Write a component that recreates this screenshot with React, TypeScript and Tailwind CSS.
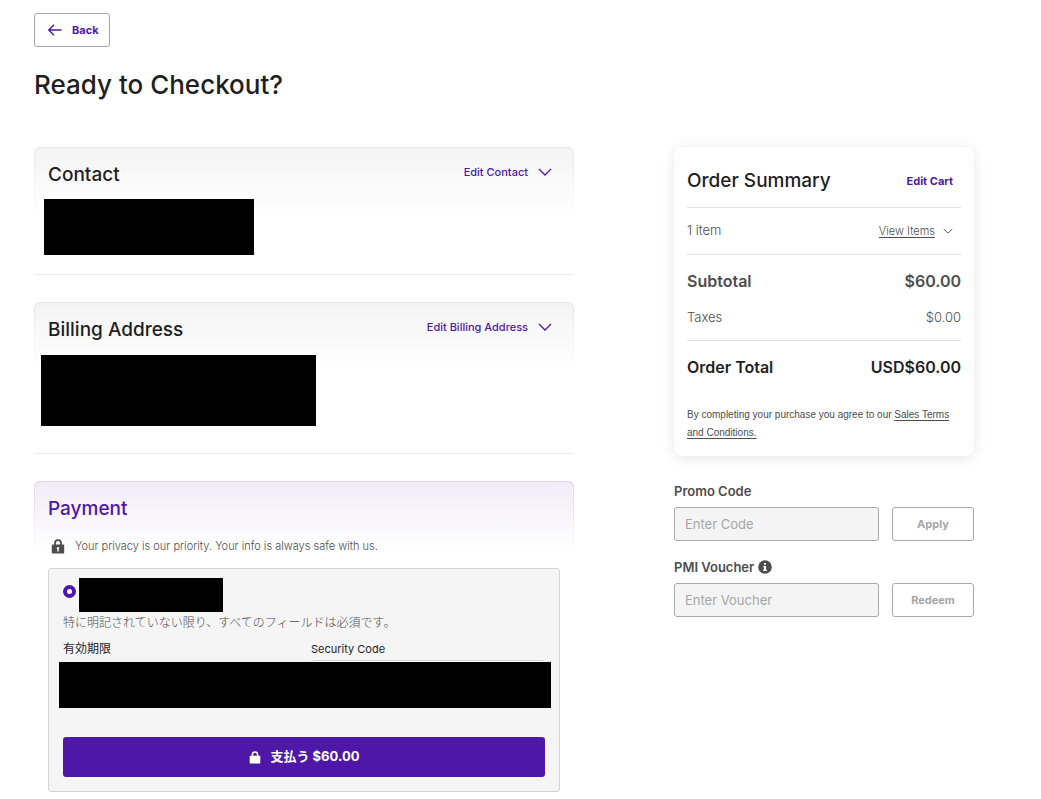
import type { ReactNode } from 'react';

function Chevron({ className }: { className: string }) {
  return (
    <svg viewBox="0 0 14 8" className={className} fill="none" stroke="currentColor" aria-hidden="true">
      <path d="M1 1l6 6 6-6" strokeWidth="1.3" />
    </svg>
  );
}

function Lock({ className, keyhole }: { className: string; keyhole?: boolean }) {
  return (
    <svg viewBox="0 0 14 15" className={className} aria-hidden="true">
      <path d="M4 7V4.2C4 2.4 5.200 1.200 7 1.200s3 1.200 3 3V7" fill="none" stroke="currentColor" strokeWidth="1.8" />
      <rect x="0.8" y="5.4" width="12.4" height="9.2" rx="1" fill="currentColor" />
      {keyhole && <path d="M7 8a1.200 1.200 0 0 1 .7 2.200v2.200H6.300v-2.200A1.200 1.200 0 0 1 7 8z" fill="#fff" />}
    </svg>
  );
}

function Info() {
  return (
    <svg viewBox="0 0 14 14" className="size-[14px]" role="img" aria-label="Info">
      <circle cx="7" cy="7" r="6.8" fill="#4d4d4d" />
      <path d="M6 3h2v1.800H6zM5.300 6H8v3.600h.8V11H5.200V9.600H6V7.300h-.7z" fill="#fff" />
    </svg>
  );
}

function Section({ title, action, children }: { title: string; action: string; children: ReactNode }) {
  return (
    <section className="mb-[27px] border-b border-[#ebebeb]">
      <div className="rounded-t-md bg-[linear-gradient(#e8e8e8,#fff_72px)] px-px pt-px">
        <div className="rounded-t-md bg-[linear-gradient(#f4f4f4,#fff_68px)]">
          <div className="flex items-start justify-between pt-[14px] pr-[21px] pl-[13px]">
            <h2 className="text-[19px] leading-[26px] font-medium text-[#1f1f1f]">{title}</h2>
            <button type="button" className="flex items-center gap-[10px] text-[11px] leading-5 font-medium text-[#4f17a8]">
              {action}
              <Chevron className="h-2 w-[14px]" />
            </button>
          </div>
          {children}
        </div>
      </div>
    </section>
  );
}

function CodeField({ id, label, placeholder, action, icon }: {
  id: string; label: string; placeholder: string; action: string; icon?: ReactNode;
}) {
  return (
    <div>
      <div className="flex items-center gap-1">
        <label htmlFor={id} className="text-[13px] leading-5 font-semibold">{label}</label>
        {icon}
      </div>
      <div className="mt-[6px] flex gap-[13px]">
        <input
          id={id}
          type="text"
          placeholder={placeholder}
          className="h-[34px] min-w-0 flex-1 rounded-[3px] border border-[#aaa] bg-[#f4f4f4] px-[10px] text-[13px] placeholder:text-[#a6a6a6]"
        />
        <button type="button" className="h-[34px] w-[82px] shrink-0 rounded-[3px] border border-[#aaa] text-[11px] font-bold text-[#a6a6a6]">
          {action}
        </button>
      </div>
    </div>
  );
}

export default function App() {
  return (
    <div className="min-h-screen bg-white pt-[13px] pr-[67px] pb-[7px] pl-[34px] font-['Inter','Noto_Sans_CJK_JP',sans-serif] text-[#4d4d4d]">
      <button type="button" className="flex h-[34px] items-center gap-[9px] rounded-[3px] border border-[#a6a6a6] pr-[10px] pl-3 text-[11px] font-bold text-[#4f17a8]">
        <svg viewBox="0 0 16 14" className="h-[14px] w-4" fill="none" stroke="currentColor" strokeWidth="1.4" aria-hidden="true">
          <path d="M14.500 7H2M7 1.800L1.800 7 7 12.200" />
        </svg>
        Back
      </button>
      <h1 className="mt-[22px] mb-[46px] text-[26px] leading-8 font-medium text-[#1f1f1f]">Ready to Checkout?</h1>

      <div className="grid grid-cols-[minmax(0,1fr)_300px] items-start gap-[100px]">
        <main>
          <Section title="Contact" action="Edit Contact">
            <div className="mt-[11px] mb-[19px] ml-[9px] h-[56px] w-[210px] bg-black" />
          </Section>

          <Section title="Billing Address" action="Edit Billing Address">
            <div className="mt-3 mb-[27px] ml-[6px] h-[71px] w-[275px] bg-black" />
          </Section>

          <section className="rounded-t-md bg-[linear-gradient(#dcd4f0,#fff_76px)] px-px pt-px">
            <div className="rounded-t-md bg-[linear-gradient(#f0ecf8,#fff_68px)] px-[13px] pt-[14px]">
              <h2 className="text-[19px] leading-[26px] font-medium text-[#4f17a8]">Payment</h2>
              <p className="mt-[14px] flex items-center gap-[10px] pl-[3px] text-[11px] leading-5 font-light">
                <Lock className="h-[15px] w-[14px]" keyhole />
                Your privacy is our priority. Your info is always safe with us.
              </p>

              <form className="mt-3 rounded-[3px] border border-[#d4d4d4] bg-[#f5f5f5] px-[14px] pt-[9px] pb-[14px]">
                <div className="flex gap-[3px]">
                  <input
                    type="radio"
                    name="card"
                    defaultChecked
                    aria-label="Saved card"
                    className="mt-[7px] size-[13px] appearance-none rounded-full border-4 border-[#4f17a8] bg-white"
                  />
                  <div className="h-[34px] w-[144px] bg-black" />
                </div>
                <p className="mt-px text-[12px] leading-5 font-light">特に明記されていない限り、すべてのフィールドは必須です。</p>

                <div className="mt-[6px] grid grid-cols-2 gap-[14px] text-[#1f1f1f]">
                  <label htmlFor="expiry" className="text-[12px] leading-5">有効期限</label>
                  <label htmlFor="cvv" className="text-[11px] leading-5">Security Code</label>
                </div>
                <div className="relative mt-px grid grid-cols-2 gap-[14px]">
                  <input id="expiry" type="text" className="mt-1 h-10 min-w-0" />
                  <input id="cvv" type="text" className="h-11 min-w-0 rounded-[3px] border border-[#d4d4d4] bg-white" />
                  <div className="absolute top-[2px] -right-[6px] -left-1 h-[46px] bg-black" />
                </div>

                <button type="submit" className="mt-[33px] flex h-10 w-full items-center justify-center gap-[10px] rounded-[3px] bg-[#4f17a8] text-[13px] font-bold text-white">
                  <Lock className="h-[13px] w-3" />
                  支払う $60.00
                </button>
              </form>
            </div>
          </section>
        </main>

        <aside>
          <div className="rounded-lg bg-white px-[13px] pb-[14px] shadow-[0_2px_14px_rgba(0,0,0,0.1)]">
            <div className="flex h-[61px] items-center justify-between border-b border-[#e0e0e0] pt-2 pr-2">
              <h2 className="text-[19px] leading-[26px] font-medium text-[#1f1f1f]">Order Summary</h2>
              <a href="#cart" className="text-[11px] leading-5 font-bold text-[#4f17a8]">Edit Cart</a>
            </div>
            <div className="flex h-[47px] items-center justify-between border-b border-[#e0e0e0] pr-2 text-[13px] font-light">
              <span>1 item</span>
              <button type="button" className="flex items-center gap-2 text-[11px]">
                <span className="underline underline-offset-2">View Items</span>
                <Chevron className="h-[6px] w-[10px]" />
              </button>
            </div>
            <div className="border-b border-[#e0e0e0] pt-4 pb-[13px]">
              <div className="flex justify-between text-[16px] leading-5 font-semibold">
                <span>Subtotal</span>
                <span>$60.00</span>
              </div>
              <div className="mt-4 flex justify-between text-[13px] leading-5 font-light">
                <span>Taxes</span>
                <span>$0.00</span>
              </div>
            </div>
            <div className="flex justify-between pt-4 text-[16px] leading-5 font-semibold text-[#1f1f1f]">
              <span>Order Total</span>
              <span>USD$60.00</span>
            </div>
            <p className="mt-[29px] font-['Liberation_Sans',sans-serif] text-[10px] leading-[18px]">
              By completing your purchase you agree to our{' '}
              <a href="#terms" className="underline underline-offset-2">Sales Terms and Conditions.</a>
            </p>
          </div>

          <div className="mt-[25px] grid grid-cols-1 gap-4">
            <CodeField id="promo" label="Promo Code" placeholder="Enter Code" action="Apply" />
            <CodeField id="voucher" label="PMI Voucher" placeholder="Enter Voucher" action="Redeem" icon={<Info />} />
          </div>
        </aside>
      </div>
    </div>
  );
}
